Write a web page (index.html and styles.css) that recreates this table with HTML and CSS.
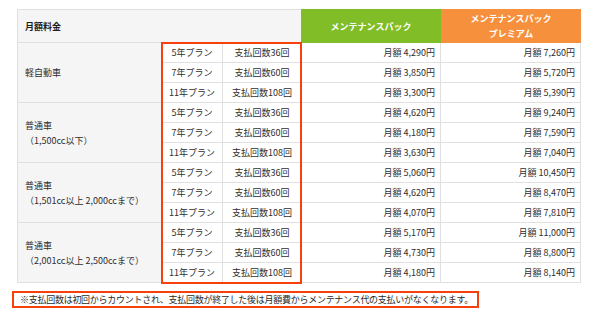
FILE: index.html
```html
<!DOCTYPE html>
<html lang="ja">
<head>
<meta charset="utf-8">
<link rel="stylesheet" href="styles.css">
</head>
<body>
<div class="table">
  <div class="head-main">月額料金</div>
  <div class="head head-green">メンテナンスパック</div>
  <div class="head head-orange">メンテナンスパック<br>プレミアム</div>

  <div class="labels">
    <div class="label">軽自動車</div>
    <div class="label">普通車<br>（1,500cc以下）</div>
    <div class="label">普通車<br>（1,501cc以上 2,000ccまで）</div>
    <div class="label">普通車<br>（2,001cc以上 2,500ccまで）</div>
  </div>

  <div class="plans">
    <div class="plan">5年プラン</div><div class="count">支払回数36回</div>
    <div class="plan">7年プラン</div><div class="count">支払回数60回</div>
    <div class="plan">11年プラン</div><div class="count">支払回数108回</div>
    <div class="plan">5年プラン</div><div class="count">支払回数36回</div>
    <div class="plan">7年プラン</div><div class="count">支払回数60回</div>
    <div class="plan">11年プラン</div><div class="count">支払回数108回</div>
    <div class="plan">5年プラン</div><div class="count">支払回数36回</div>
    <div class="plan">7年プラン</div><div class="count">支払回数60回</div>
    <div class="plan">11年プラン</div><div class="count">支払回数108回</div>
    <div class="plan">5年プラン</div><div class="count">支払回数36回</div>
    <div class="plan">7年プラン</div><div class="count">支払回数60回</div>
    <div class="plan">11年プラン</div><div class="count">支払回数108回</div>
  </div>

  <div class="values">
    <div class="val">月額 4,290円</div>
    <div class="val">月額 3,850円</div>
    <div class="val">月額 3,300円</div>
    <div class="val">月額 4,620円</div>
    <div class="val">月額 4,180円</div>
    <div class="val">月額 3,630円</div>
    <div class="val">月額 5,060円</div>
    <div class="val">月額 4,620円</div>
    <div class="val">月額 4,070円</div>
    <div class="val">月額 5,170円</div>
    <div class="val">月額 4,730円</div>
    <div class="val">月額 4,180円</div>
  </div>

  <div class="values">
    <div class="val">月額 7,260円</div>
    <div class="val">月額 5,720円</div>
    <div class="val">月額 5,390円</div>
    <div class="val">月額 9,240円</div>
    <div class="val">月額 7,590円</div>
    <div class="val">月額 7,040円</div>
    <div class="val">月額 10,450円</div>
    <div class="val">月額 8,470円</div>
    <div class="val">月額 7,810円</div>
    <div class="val">月額 11,000円</div>
    <div class="val">月額 8,800円</div>
    <div class="val">月額 8,140円</div>
  </div>
</div>

<p class="note">※支払回数は初回からカウントされ、支払回数が終了した後は月額費からメンテナンス代の支払いがなくなります。</p>
</body>
</html>
```

FILE: styles.css
```css
html, body {
  margin: 0;
  background: #ffffff;
}

body {
  padding: 9px 0 0 17px;
  font-family: "Noto Sans CJK JP", "Noto Sans", sans-serif;
  font-size: 9px;
  color: #2e2e2e;
}

.table {
  display: grid;
  grid-template-columns: 145px 139px 140px 140px;
  width: 564px;
}

.head-main {
  grid-column: 1 / 3;
  height: 34px;
  box-sizing: border-box;
  background: #f5f5f5;
  border: 1px solid #e0e0e0;
  border-right: 0;
  display: flex;
  align-items: center;
  padding-left: 7px;
  font-weight: bold;
  color: #1e1e1e;
}

.head {
  height: 34px;
  display: flex;
  align-items: center;
  justify-content: center;
  text-align: center;
  line-height: 15px;
  font-weight: bold;
  color: #ffffff;
}

.head-green {
  background: #80bd26;
}

.head-orange {
  background: #f7903c;
}

.labels {
  display: flex;
  flex-direction: column;
}

.label {
  height: 60px;
  box-sizing: border-box;
  background: #f5f5f5;
  border-left: 1px solid #e0e0e0;
  border-right: 1px solid #e0e0e0;
  border-bottom: 1px solid #e0e0e0;
  display: flex;
  align-items: center;
  padding-left: 7px;
  line-height: 15px;
}

.plans {
  display: grid;
  grid-template-columns: 61px 78px;
  grid-auto-rows: 20px;
  outline: 2px solid #f8400c;
  outline-offset: -1px;
  position: relative;
  z-index: 1;
}

.plan,
.count {
  box-sizing: border-box;
  border-bottom: 1px solid #e0e0e0;
  display: flex;
  align-items: center;
  justify-content: center;
  background: #ffffff;
}

.plan {
  border-right: 1px solid #e0e0e0;
}

.values {
  display: flex;
  flex-direction: column;
}

.val {
  height: 20px;
  box-sizing: border-box;
  border-bottom: 1px solid #e0e0e0;
  border-right: 1px solid #e0e0e0;
  display: flex;
  align-items: center;
  justify-content: flex-end;
  padding-right: 5px;
}

.note {
  display: inline-block;
  margin: 8px 0 0 -5px;
  padding: 0 4px 0 6px;
  border: 2px solid #f8400c;
  height: 17px;
  box-sizing: border-box;
  line-height: 13px;
  white-space: nowrap;
  letter-spacing: -0.27px;
  color: #2a2a2a;
}
```
